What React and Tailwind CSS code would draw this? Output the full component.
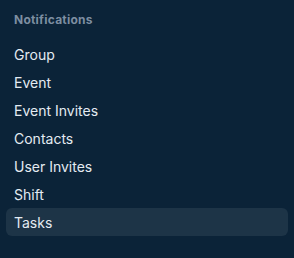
import { useState } from "react";

const items = ["Group", "Event", "Event Invites", "Contacts", "User Invites", "Shift", "Tasks"];

const App = () => {
  const [active, setActive] = useState("Tasks");

  return (
    <div
      className="w-[294px] h-[258px] bg-[#0b2338] px-[6px] pt-[12px]"
      style={{ fontFamily: "Inter, 'Noto Sans', sans-serif" }}
    >
      <div className="px-2 text-[12px] leading-4 font-bold tracking-[0.02em] text-[#7d8ea1] mb-3">
        Notifications
      </div>
      <ul className="flex flex-col">
        {items.map((name) => (
          <li
            key={name}
            onClick={() => setActive(name)}
            className={`h-7 flex items-center px-2 rounded-md text-[14px] text-[#e4ebf2] cursor-pointer ${
              active === name ? "bg-[#1d3447]" : ""
            }`}
          >
            {name}
          </li>
        ))}
      </ul>
    </div>
  );
};

export default App;
